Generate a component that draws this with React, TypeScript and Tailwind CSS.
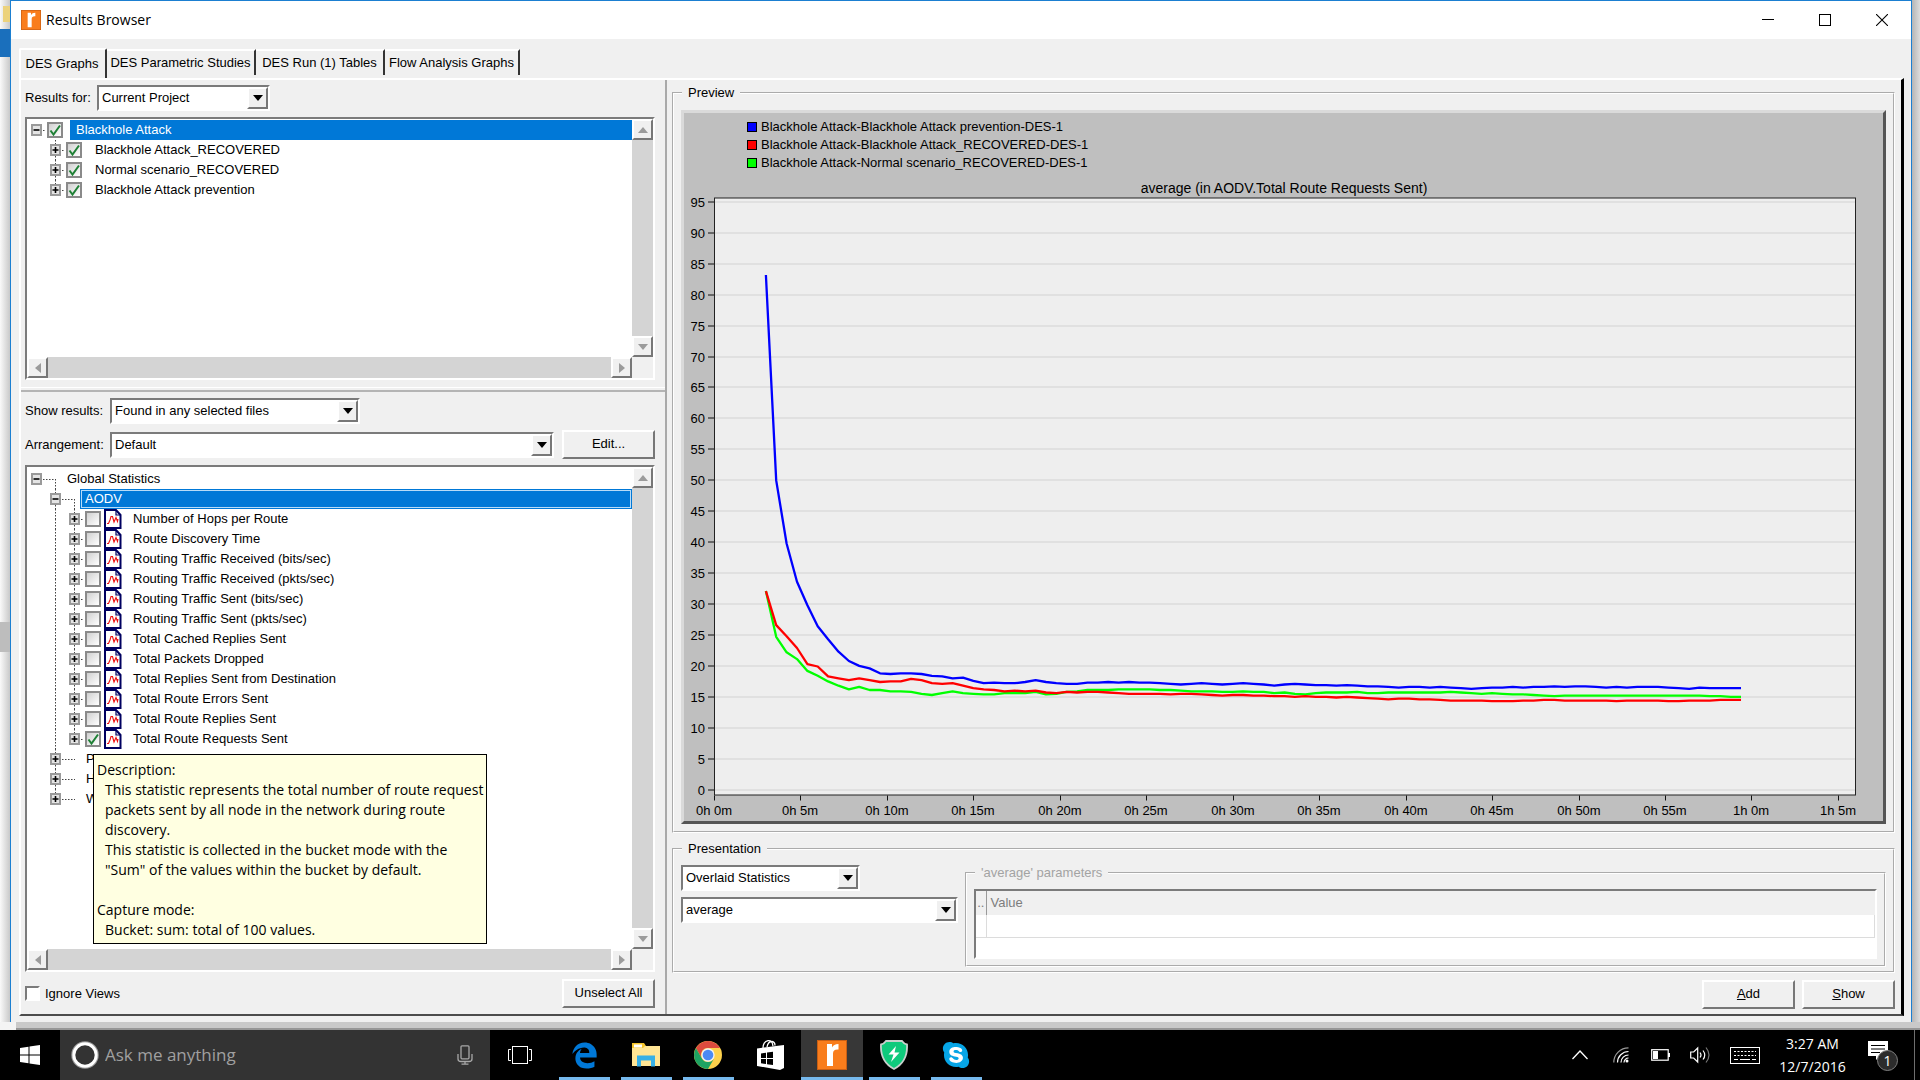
import React from "react";
import { FaEdgeLegacy, FaSkype } from "react-icons/fa6";

const UI = "font-['Liberation_Sans',Arial,sans-serif]";
const SEGOE = "font-['Open_Sans','Noto_Sans',sans-serif]";

/* ---------- chart data: one sample every 36 seconds, starting at 3 minutes ---------- */

const PREVENTION = [
  83.1, 49.9, 39.7, 33.5, 29.7, 26.3, 24.2, 22.2, 20.7, 19.9, 19.5, 18.7, 18.6, 18.7, 18.7, 18.6, 18.3, 18.2, 17.9,
  18.0, 17.5, 17.1, 17.2, 17.1, 17.1, 17.3, 17.6, 17.3, 17.1, 17.0, 17.0, 17.2, 17.2, 17.3, 17.2, 17.3, 17.2, 17.2,
  17.1, 17.0, 16.9, 17.0, 17.1, 17.0, 16.9, 17.0, 17.1, 17.0, 16.9, 16.7, 16.9, 17.0, 16.9, 16.8, 16.8, 16.7, 16.8,
  16.7, 16.6, 16.6, 16.5, 16.4, 16.5, 16.5, 16.4, 16.5, 16.4, 16.3, 16.2, 16.3, 16.4, 16.4, 16.5, 16.4, 16.5, 16.5,
  16.6, 16.5, 16.6, 16.6, 16.5, 16.4, 16.5, 16.4, 16.5, 16.5, 16.5, 16.4, 16.3, 16.2, 16.4, 16.3, 16.3, 16.3, 16.3,
];

const RECOVERED = [
  32.0, 26.5, 24.7, 22.8, 20.2, 19.8, 18.2, 17.9, 17.6, 17.9, 17.6, 17.3, 17.4, 17.4, 17.8, 17.6, 17.1, 17.0, 17.1,
  16.7, 16.3, 16.1, 16.0, 15.8, 15.9, 15.8, 15.9, 15.6, 15.5, 15.7, 15.6, 15.7, 15.7, 15.6, 15.5, 15.4, 15.4, 15.4,
  15.4, 15.3, 15.4, 15.4, 15.3, 15.2, 15.1, 15.2, 15.2, 15.1, 15.1, 15.0, 15.0, 14.9, 15.0, 14.9, 14.9, 14.8, 14.9,
  14.8, 14.7, 14.6, 14.5, 14.6, 14.6, 14.5, 14.5, 14.4, 14.3, 14.3, 14.3, 14.3, 14.2, 14.2, 14.2, 14.3, 14.3, 14.4,
  14.4, 14.3, 14.3, 14.3, 14.3, 14.3, 14.2, 14.3, 14.3, 14.3, 14.3, 14.2, 14.2, 14.3, 14.3, 14.3, 14.4, 14.4, 14.4,
];

const NORMAL = [
  32.0, 24.6, 22.1, 21.0, 19.1, 18.3, 17.4, 16.7, 16.1, 16.5, 16.0, 16.0, 15.8, 15.8, 15.7, 15.4, 15.2, 15.5, 15.8,
  15.5, 15.4, 15.3, 15.3, 15.5, 15.5, 15.5, 15.7, 15.3, 15.4, 15.7, 15.8, 16.0, 16.0, 16.0, 16.1, 16.1, 16.1, 16.1,
  16.0, 16.0, 15.9, 15.8, 15.8, 15.8, 15.7, 15.7, 15.8, 15.7, 15.7, 15.5, 15.6, 15.4, 15.3, 15.5, 15.6, 15.6, 15.6,
  15.7, 15.5, 15.5, 15.6, 15.6, 15.6, 15.6, 15.6, 15.6, 15.7, 15.6, 15.5, 15.4, 15.5, 15.4, 15.3, 15.3, 15.2, 15.1,
  15.0, 15.1, 15.1, 15.1, 15.1, 15.1, 15.1, 15.1, 15.1, 15.1, 15.1, 15.1, 15.1, 15.1, 15.1, 15.0, 15.0, 14.9, 14.9,
];

const SERIES = [
  { name: "Blackhole Attack-Blackhole Attack prevention-DES-1", swatch: "bg-[#0000ff]" },
  { name: "Blackhole Attack-Blackhole Attack_RECOVERED-DES-1", swatch: "bg-[#ff0000]" },
  { name: "Blackhole Attack-Normal scenario_RECOVERED-DES-1", swatch: "bg-[#00ff00]" },
];

const chartX = (minutes: number) => 30 + minutes * 17.29;
const chartY = (value: number) => 617.5 - value * 6.185;
const toPoints = (values: number[]) =>
  values.map((v, i) => `${chartX(3 + i * 0.6).toFixed(1)},${chartY(v).toFixed(1)}`).join(" ");

const Y_TICKS = Array.from({ length: 20 }, (_, i) => i * 5);
const X_TICKS = Array.from({ length: 14 }, (_, i) => i * 5);

function Chart() {
  return (
    <svg viewBox="0 1 1199 648" className="min-h-0 w-full flex-1" role="img" aria-label="average (in AODV.Total Route Requests Sent)">
      <g fontSize="13" fill="#000">
        <text x="600" y="21" textAnchor="middle" fontSize="14">average (in AODV.Total Route Requests Sent)</text>
        {Y_TICKS.map((v) => (
          <text key={v} x="21" y={Math.round(chartY(v)) + 5} textAnchor="end">{v}</text>
        ))}
        {X_TICKS.map((m) => (
          <text key={m} x={Math.round(chartX(m))} y="643" textAnchor="middle">
            {`${Math.floor(m / 60)}h ${m % 60}m`}
          </text>
        ))}
      </g>
      <rect x="30.5" y="26.5" width="1141" height="597" fill="#eeeeee" stroke="#222" />
      <g strokeWidth="1">
        {Y_TICKS.map((v) => (
          <g key={v}>
            <path d={`M31 ${Math.round(chartY(v)) + 0.5}H1171`} stroke="#d2d2d2" />
            <path d={`M24 ${Math.round(chartY(v)) + 0.5}H30`} stroke="#111" />
          </g>
        ))}
        {X_TICKS.map((m) => (
          <path key={m} d={`M${Math.round(chartX(m)) + 0.5} 624v5`} stroke="#111" />
        ))}
      </g>
      <g fill="none" strokeWidth="2.3" strokeLinejoin="round">
        <polyline points={toPoints(PREVENTION)} stroke="#0000ff" />
        <polyline points={toPoints(NORMAL)} stroke="#00ff00" />
        <polyline points={toPoints(RECOVERED)} stroke="#ff0000" />
      </g>
    </svg>
  );
}

/* ---------- controls ---------- */

const SUNKEN = "border-2 border-t-[#7b7b7b] border-l-[#7b7b7b] border-r-white border-b-white";
const RAISED = "border-2 border-t-white border-l-white border-r-[#777777] border-b-[#777777] bg-[#f0f0f0]";

function Combo({ id, value, label, className }: { id: string; value: string; label?: string; className: string }) {
  return (
    <div className={`flex h-[26px] bg-white ${SUNKEN} ${className}`}>
      <select id={id} aria-label={label} className="min-w-0 flex-1 appearance-none bg-white pl-[3px] outline-none">
        <option>{value}</option>
      </select>
      <span className={`pointer-events-none flex w-[21px] items-center justify-center ${RAISED}`}>
        <svg width="10" height="6" viewBox="0 0 10 6"><path d="M0 0h10L5 6z" fill="#000" /></svg>
      </span>
    </div>
  );
}

function PushButton({ children }: { children: React.ReactNode }) {
  return (
    <button type="button" className={`h-[29px] w-[93px] shrink-0 pb-0.5 text-center ${RAISED}`}>
      {children}
    </button>
  );
}

function ScrollButton({ dir }: { dir: "up" | "down" | "left" | "right" }) {
  const d = {
    up: "M5 2l5 6H0z",
    down: "M0 2h10L5 8z",
    left: "M2 5l6-5v10z",
    right: "M8 5L2 0v10z",
  }[dir];
  return (
    <button type="button" aria-label={`Scroll ${dir}`} className={`flex h-[21px] w-[21px] shrink-0 items-center justify-center ${RAISED}`}>
      <svg width="10" height="10" viewBox="0 0 10 10"><path d={d} fill="#9b9b9b" /></svg>
    </button>
  );
}

function ScrollPane({ children }: { children: React.ReactNode }) {
  return (
    <div className="grid h-full grid-cols-[1fr_21px] grid-rows-[1fr_21px] bg-[#f0f0f0]">
      <div className="min-h-0 min-w-0 bg-white">{children}</div>
      <div className="flex flex-col justify-between bg-[#d4d4d4]">
        <ScrollButton dir="up" />
        <ScrollButton dir="down" />
      </div>
      <div className="flex justify-between bg-[#d4d4d4]">
        <ScrollButton dir="left" />
        <ScrollButton dir="right" />
      </div>
    </div>
  );
}

function TreeCheck({ label, checked }: { label: string; checked?: boolean }) {
  return (
    <span className="relative ml-px h-4 w-4 shrink-0">
      <input
        type="checkbox"
        aria-label={label}
        defaultChecked={checked}
        className="peer block h-4 w-4 appearance-none border-2 border-[#8a8a8a] bg-linear-to-br from-[#d0d0d0] to-white"
      />
      <svg className="pointer-events-none absolute inset-0 hidden peer-checked:block" width="16" height="16" viewBox="0 0 16 16">
        <path d="M3.5 8.5l3 4L13 3.5" fill="none" stroke="#1f8136" strokeWidth="2" />
      </svg>
    </span>
  );
}

/* One 19px indent step of the tree: dotted guides plus an optional expander box. */
function Guide({ up, down, stub, box }: { up?: boolean; down?: boolean; stub?: boolean; box?: "+" | "-" }) {
  return (
    <svg width="19" height="20" viewBox="0 0 19 20" className="shrink-0">
      <g stroke="#444" strokeDasharray="1.5 1.5" fill="none">
        {up && <path d="M9.5 0v10" />}
        {down && <path d="M9.5 10v10" />}
        {stub && <path d="M0 10.5h10" />}
        {box && <path d="M10 10.5h9" />}
      </g>
      {box && (
        <g>
          <rect x="5" y="5" width="9" height="10" fill="#e4e4e4" stroke="#9a9a9a" strokeWidth="2" />
          <path d={box === "+" ? "M6.500 10h6M9.500 7v6" : "M6.500 10h6"} stroke="#000" strokeWidth="1.6" />
        </g>
      )}
    </svg>
  );
}

function Blank() {
  return <span className="w-[19px] shrink-0" />;
}

function StatIcon() {
  return (
    <svg width="18" height="20" viewBox="0 0 18 20" className="ml-[3px] shrink-0">
      <path d="M1 1h11l4.500 5v13H1z" fill="#fff" stroke="#000060" strokeWidth="2" />
      <path d="M12 1v5h4.500" fill="none" stroke="#000060" strokeWidth="1.2" />
      <path d="M3 14.500h1.500l1.500-3.500 1-3.500h1.500l1.500 5.500 2-4.500 1.500 4 .5-2.500" fill="none" stroke="#f01010" strokeWidth="1.1" />
    </svg>
  );
}

/* ---------- left column ---------- */

const PROJECTS = ["Blackhole Attack_RECOVERED", "Normal scenario_RECOVERED", "Blackhole Attack prevention"];

const STATS = [
  "Number of Hops per Route",
  "Route Discovery Time",
  "Routing Traffic Received (bits/sec)",
  "Routing Traffic Received (pkts/sec)",
  "Routing Traffic Sent (bits/sec)",
  "Routing Traffic Sent (pkts/sec)",
  "Total Cached Replies Sent",
  "Total Packets Dropped",
  "Total Replies Sent from Destination",
  "Total Route Errors Sent",
  "Total Route Replies Sent",
  "Total Route Requests Sent",
];

const ROW = "flex h-5 items-center whitespace-nowrap";

function ProjectTree() {
  return (
    <ScrollPane>
      <ul className="pt-px">
        <li className={ROW}>
          <Guide box="-" />
          <TreeCheck label="Blackhole Attack" checked />
          <span className="ml-[7px] h-5 flex-1 bg-[#0078d7] pl-1.5 leading-5 text-white">Blackhole Attack</span>
        </li>
        {PROJECTS.map((name, i) => (
          <li key={name} className={ROW}>
            <Blank />
            <Guide box="+" up down={i < 2} />
            <TreeCheck label={name} checked />
            <span className="ml-[13px]">{name}</span>
          </li>
        ))}
      </ul>
    </ScrollPane>
  );
}

function Tooltip() {
  return (
    <div
      role="tooltip"
      className={`absolute top-[287px] left-[66px] w-[394px] border border-black bg-[#ffffe1] px-[3px] pt-[5px] pb-[3px] text-sm leading-5 whitespace-nowrap ${SEGOE}`}
    >
      <p>Description:</p>
      <div className="pl-2">
        <p>This statistic represents the total number of route request</p>
        <p>packets sent by all node in the network during route</p>
        <p>discovery.</p>
        <p>This statistic is collected in the bucket mode with the</p>
        <p>"Sum" of the values within the bucket by default.</p>
      </div>
      <p className="mt-5">Capture mode:</p>
      <p className="pl-2">Bucket: sum: total of 100 values.</p>
    </div>
  );
}

function StatisticsTree() {
  return (
    <ScrollPane>
      <ul className="pt-0.5">
        <li className={ROW}>
          <Guide box="-" />
          <Guide stub down />
          <span className="ml-0.5">Global Statistics</span>
        </li>
        <li className={ROW}>
          <Blank />
          <Guide box="-" up down />
          <Guide stub down />
          <span className="-ml-1 h-5 flex-1 border border-[#0078d7] bg-[#0078d7] pl-1 leading-[18px] text-white inset-ring inset-ring-[#b8dcf8]">
            AODV
          </span>
        </li>
        {STATS.map((name, i) => (
          <li key={name} className={ROW}>
            <Blank />
            <Guide up down />
            <Guide box="+" up down={i < STATS.length - 1} />
            <TreeCheck label={name} checked={i === STATS.length - 1} />
            <StatIcon />
            <span className="ml-[11px]">{name}</span>
          </li>
        ))}
        {["P", "H", "W"].map((name, i) => (
          <li key={name} className={ROW}>
            <Blank />
            <Guide box="+" up down={i < 2} />
            <Guide stub />
            <span className="ml-0.5">{name}</span>
          </li>
        ))}
      </ul>
    </ScrollPane>
  );
}

function LeftColumn() {
  return (
    <div className="flex w-[644px] shrink-0 flex-col">
      <section className="border-b border-white pt-[5px] pr-[10px] pb-[7px] pl-1">
        <div className="flex items-center">
          <label htmlFor="results-for" className="w-[72px]">Results for:</label>
          <Combo id="results-for" value="Current Project" className="w-[173px]" />
        </div>
        <div className={`mt-1.5 h-[263px] ${SUNKEN}`}>
          <ProjectTree />
        </div>
      </section>
      <section className="mt-0.5 flex min-h-0 flex-1 flex-col border-t-2 border-[#b4b4b4] pt-1.5 pr-[10px] pb-1.5 pl-1">
        <div className="flex items-center">
          <label htmlFor="show-results" className="w-[85px]">Show results:</label>
          <Combo id="show-results" value="Found in any selected files" className="w-[250px]" />
        </div>
        <div className="mt-1.5 flex items-center">
          <label htmlFor="arrangement" className="w-[85px] shrink-0">Arrangement:</label>
          <Combo id="arrangement" value="Default" className="mr-2 flex-1" />
          <PushButton>Edit...</PushButton>
        </div>
        <div className={`relative mt-1.5 min-h-0 flex-1 ${SUNKEN}`}>
          <StatisticsTree />
          <Tooltip />
        </div>
        <div className="mt-[7px] flex items-center justify-between">
          <label className="flex items-center gap-[5px]">
            <input type="checkbox" className={`h-[15px] w-[15px] appearance-none bg-white ${SUNKEN}`} />
            Ignore Views
          </label>
          <PushButton>Unselect All</PushButton>
        </div>
      </section>
    </div>
  );
}

/* ---------- right column ---------- */

const GROUP = "min-w-0 border-2 border-white [border-style:groove]";

function RightColumn() {
  return (
    <div className="flex min-w-0 flex-1 flex-col border-l-2 border-[#a9a9a9] pt-[3px] pr-1.5 pb-[5px] pl-[5px]">
      <fieldset className={`flex min-h-0 flex-1 flex-col px-[7px] pt-[7px] pb-[7px] ${GROUP}`}>
        <legend className="ml-px px-1.5 leading-5">Preview</legend>
        <div className="flex h-full min-h-0 flex-col border-3 border-t-[#dadada] border-r-[#555555] border-b-[#555555] border-l-[#dadada] bg-[#bfbfbf] pt-[5px]">
          <ul className="ml-[63px]">
            {SERIES.map((s) => (
              <li key={s.name} className="flex h-[18px] items-center gap-1">
                <span className={`h-2.5 w-2.5 border border-black ${s.swatch}`} />
                {s.name}
              </li>
            ))}
          </ul>
          <Chart />
        </div>
      </fieldset>

      <fieldset className={`mt-1.5 px-[7px] pb-[4px] ${GROUP}`}>
        <legend className="ml-px px-1.5 leading-5">Presentation</legend>
        <div className="flex gap-[7px]">
          <div className="flex w-[277px] flex-col gap-1.5 pt-1.5">
            <Combo id="presentation" label="Presentation" value="Overlaid Statistics" className="w-[179px]" />
            <Combo id="filter" label="Filter" value="average" className="w-full" />
          </div>
          <fieldset disabled className={`mt-1 flex-1 px-[7px] pt-1.5 pb-[6px] ${GROUP}`}>
            <legend className="ml-px px-1.5 leading-5 text-[#a3a3a3]">'average' parameters</legend>
            <div className={`h-[70px] bg-white ${SUNKEN}`}>
              <table className="w-full border-collapse text-left text-[#7d7d7d]">
                <thead>
                  <tr className="h-6 bg-[#f0f0f0]">
                    <th className="w-2.5 border-r border-[#999999] p-0 text-center font-normal">..</th>
                    <th className="py-0 pr-0 pl-1 font-normal">Value</th>
                  </tr>
                </thead>
                <tbody>
                  <tr className="h-[22px] border-b border-[#dcdcdc]">
                    <td className="border-r border-[#dcdcdc] p-0" />
                    <td className="border-r border-[#dcdcdc] p-0" />
                  </tr>
                </tbody>
              </table>
            </div>
          </fieldset>
        </div>
      </fieldset>

      <div className="mt-[7px] flex justify-end gap-[7px]">
        <PushButton><u>A</u>dd</PushButton>
        <PushButton><u>S</u>how</PushButton>
      </div>
    </div>
  );
}

/* ---------- window ---------- */

function RLogo({ size }: { size: number }) {
  return (
    <svg width={size} height={size} viewBox="0 0 30 30">
      <rect width="30" height="30" fill="#c85f14" />
      <rect x="1" y="1" width="28" height="28" fill="#f97d1c" />
      <path d="M10 4h5v3.500Q16.500 4 21.500 4v5.500Q16 9 16 13.500V26h-6z" fill="#fff" />
    </svg>
  );
}

const TABS = [
  { name: "DES Parametric Studies", width: "w-[149px]" },
  { name: "DES Run (1) Tables", width: "w-[129px]" },
  { name: "Flow Analysis Graphs", width: "w-[135px]" },
];

function ResultsWindow() {
  return (
    <div className="flex min-w-0 flex-1 flex-col border border-b-0 border-[#1b7fd1] bg-[#f0f0f0]">
      <header className={`flex h-[38px] shrink-0 items-center bg-white pr-px pl-2.5 ${SEGOE}`}>
        <RLogo size={20} />
        <h1 className="ml-[5px] flex-1 text-sm">Results Browser</h1>
        <button type="button" aria-label="Minimize" className="flex h-full w-[57px] items-center justify-center">
          <svg width="12" height="12" viewBox="0 0 12 12"><path d="M0 5.500h12" stroke="#000" /></svg>
        </button>
        <button type="button" aria-label="Maximize" className="flex h-full w-[57px] items-center justify-center">
          <svg width="12" height="12" viewBox="0 0 12 12"><rect x=".5" y=".5" width="11" height="11" fill="none" stroke="#000" /></svg>
        </button>
        <button type="button" aria-label="Close" className="flex h-full w-[57px] items-center justify-center">
          <svg width="12" height="12" viewBox="0 0 12 12"><path d="M0 0l12 12M12 0L0 12" stroke="#000" strokeWidth="1.1" /></svg>
        </button>
      </header>
      <div className={`flex min-h-0 flex-1 flex-col pt-[9px] pr-[7px] pb-1.5 pl-2 text-[13px] ${UI}`}>
        <div role="tablist" className="flex h-[30px] shrink-0 items-end">
          <button type="button" role="tab" aria-selected="true" className="h-full w-[88px] rounded-t-xs border-2 border-r-2 border-b-0 border-white border-r-[#333333] pr-0.5 text-center">
            DES Graphs
          </button>
          {TABS.map((t) => (
            <button key={t.name} type="button" role="tab" aria-selected="false" className={`mb-[3px] h-[26px] border-t-2 border-r-2 border-t-white border-r-[#333333] text-center whitespace-nowrap ${t.width}`}>
              {t.name}
            </button>
          ))}
        </div>
        <div className="flex min-h-0 flex-1 border-t-2 border-r-3 border-b-2 border-l-2 border-t-white border-r-black border-b-[#4c4c4c] border-l-white">
          <LeftColumn />
          <RightColumn />
        </div>
      </div>
    </div>
  );
}

/* ---------- taskbar ---------- */

function TaskButton({ label, open, active, children }: { label: string; open?: boolean; active?: boolean; children: React.ReactNode }) {
  return (
    <button
      type="button"
      aria-label={label}
      className={`flex h-full w-[62px] flex-col items-center ${active ? "bg-[#373737]" : ""}`}
    >
      <span className="flex flex-1 items-center pt-[3px]">{children}</span>
      <span className={`h-[3px] ${active ? "w-full" : "w-[51px]"} ${open ? "bg-[#76b9ed]" : ""}`} />
    </button>
  );
}

function Taskbar() {
  return (
    <footer className={`flex h-[50px] shrink-0 items-center bg-black text-white ${SEGOE}`}>
      <button type="button" aria-label="Start" className="flex h-full w-[60px] items-center justify-center">
        <svg width="20" height="20" viewBox="0 0 20 20" fill="#fff">
          <path d="M0 3l8.500-1.300v7.800H0zM9.500 1.500L20 0v9.500H9.500zM0 10.500h8.500v7.800L0 17zM9.500 10.500H20V20L9.500 18.500z" />
        </svg>
      </button>
      <label className="flex h-full w-[430px] items-center bg-[#333333] pr-[17px] pl-[11px]">
        <svg width="28" height="28" viewBox="0 0 28 28" className="shrink-0">
          <circle cx="14" cy="14" r="13" fill="none" stroke="#9a9a9a" strokeWidth="1.5" />
          <circle cx="14" cy="14" r="11.200" fill="none" stroke="#fff" strokeWidth="3" />
        </svg>
        <input type="text" aria-label="Search" placeholder="Ask me anything" className="ml-1.5 min-w-0 flex-1 bg-transparent text-[17px] outline-none placeholder:text-[#a0a0a0]" />
        <svg width="16" height="20" viewBox="0 0 16 20" fill="none" stroke="#a8a8a8" strokeWidth="1.3">
          <rect x="4" y=".8" width="8" height="13" rx="1" />
          <path d="M1 9v5q0 2.500 3 2.500h8q3 0 3-2.500V9M8 16.500V19M4.500 19.200h7" />
        </svg>
      </label>
      <button type="button" aria-label="Task View" className="flex h-full w-[63px] items-center justify-center pr-1">
        <svg width="24" height="18" viewBox="0 0 24 18" fill="none" stroke="#fff">
          <rect x="4.500" y=".5" width="15" height="17" />
          <path d="M3 3.500H.5v11H3M21 3.500h2.500v11H21" />
        </svg>
      </button>
      <TaskButton label="Microsoft Edge" open>
        <FaEdgeLegacy size={27} color="#0078d7" />
      </TaskButton>
      <TaskButton label="File Explorer" open>
        <svg width="28" height="24" viewBox="0 0 28 24">
          <path d="M0 0h12l2 3h13v8H0z" fill="#f5c52c" />
          <path d="M2 1.500h8v3H2z" fill="#fff" />
          <path d="M0 5h11l2-2h15v20H0z" fill="#ffe594" />
          <path d="M5 23.500V12.500h18v11h-4v-6h-10v6z" fill="#37b0e6" />
        </svg>
      </TaskButton>
      <TaskButton label="Google Chrome" open>
        <svg width="28" height="28" viewBox="0 0 28 28">
          <circle cx="14" cy="14" r="14" fill="#fdd14c" />
          <path d="M1.900 7A14 14 0 0 1 26.100 7H14a7 7 0 0 0-6.100 10.500z" fill="#dc4b3e" />
          <path d="M1.900 7A14 14 0 0 0 14 28l6.100-10.500A7 7 0 0 1 7.900 17.500z" fill="#1ea362" />
          <circle cx="14" cy="14" r="6.700" fill="#f1f1f1" />
          <circle cx="14" cy="14" r="5.300" fill="#4a8af4" />
        </svg>
      </TaskButton>
      <TaskButton label="Store">
        <svg width="27" height="30" viewBox="0 0 27 30">
          <path d="M6 8q0-6 5-7.300 4.500-.5 5 5.500M10 7q1-5.500 5-5.500 3 .5 3 4" fill="none" stroke="#fff" strokeWidth="1.300" />
          <path d="M0 8.500L27 5v23l-4 2-23-4z" fill="#fff" />
          <path d="M4 13.500l5-.7v5.200H4zM10 12.600l6-.8V18h-6zM4 19h5v5l-5-.7zM10 19h6v6l-6-.8z" fill="#000" />
        </svg>
      </TaskButton>
      <TaskButton label="Results Browser" open active>
        <RLogo size={30} />
      </TaskButton>
      <TaskButton label="Security" open>
        <svg width="28" height="30" viewBox="0 0 28 30">
          <path d="M6 1h16q2 3 5 3.500 1 17-13 24.500Q0 21.500 1 4.500 4 4 6 1z" fill="#0fca7c" stroke="#c8cfcc" strokeWidth="1.800" />
          <path d="M16 6l-7.500 8.500h5L11 22l8.500-9.500h-5z" fill="#fff" />
        </svg>
      </TaskButton>
      <TaskButton label="Skype" open>
        <span className="rounded-full bg-[radial-gradient(white_50%,transparent_52%)]">
          <FaSkype size={30} color="#06a5e6" />
        </span>
      </TaskButton>

      <div className="ml-auto flex h-full items-center">
        <button type="button" aria-label="Show hidden icons" className="flex w-8 justify-center">
          <svg width="16" height="10" viewBox="0 0 16 10"><path d="M.5 9L8 1l7.500 8" fill="none" stroke="#fff" strokeWidth="1.300" /></svg>
        </button>
        <button type="button" aria-label="Network" className="ml-[17px]">
          <svg width="16" height="16" viewBox="0 0 16 16" fill="none" strokeWidth="1.200">
            <path d="M.8 15.500A14.700 14.700 0 0 1 15.500.8" stroke="#999" />
            <path d="M4.500 15.500a11 11 0 0 1 11-11M8 15.500A7.500 7.500 0 0 1 15.500 8" stroke="#fff" />
            <path d="M11 15.500a4.500 4.500 0 0 1 4.500-4.500" stroke="#fff" />
            <circle cx="14" cy="14" r="1.500" fill="#fff" />
          </svg>
        </button>
        <button type="button" aria-label="Battery" className="ml-[22px]">
          <svg width="19" height="12" viewBox="0 0 19 12">
            <rect x=".7" y=".7" width="16.500" height="10.500" fill="none" stroke="#fff" strokeWidth="1.200" />
            <path d="M2 2h5v8H2zM17 4h2v4h-2z" fill="#fff" />
          </svg>
        </button>
        <button type="button" aria-label="Volume" className="ml-5">
          <svg width="21" height="18" viewBox="0 0 21 18" fill="none" stroke="#fff" strokeWidth="1.200">
            <path d="M.7 6h3l4-4v14l-4-4h-3z" />
            <path d="M10 6.500q2 2.500 0 5M13 4.500q3.500 4.500 0 9" />
            <path d="M16 1.500q6 7.500 0 15" stroke="#777" />
          </svg>
        </button>
        <button type="button" aria-label="Touch keyboard" className="ml-[19px]">
          <svg width="30" height="17" viewBox="0 0 30 17" fill="none" stroke="#fff">
            <rect x=".5" y=".5" width="29" height="16" />
            <path d="M4 4.500h22M4 8.500h22" strokeDasharray="2 1.500" strokeWidth="1.200" />
            <path d="M4 12.500h4M10 12.500h10M22 12.500h4" strokeWidth="1.200" />
          </svg>
        </button>
        <div className="ml-[18px] w-[69px] text-center text-sm leading-[23px]">
          <p>3:27 AM</p>
          <p>12/7/2016</p>
        </div>
        <button type="button" aria-label="1 notification" className="relative ml-5 h-[31px] w-[31px]">
          <svg width="31" height="31" viewBox="0 0 31 31">
            <path d="M1 1h20v15H13l-4 4v-4H1z" fill="#fff" />
            <path d="M4 5.500h14M4 9h14M4 12.500h9" stroke="#000" strokeWidth="1.200" />
            <circle cx="20.500" cy="20.500" r="10" fill="#2c2c2c" stroke="#808080" />
          </svg>
          <span className="absolute right-0 bottom-0 w-[21px] text-center text-sm leading-[21px]">1</span>
        </button>
        <span className="ml-4 h-[50px] w-1.5 border-l border-[#6e6e6e]" />
      </div>
    </footer>
  );
}

export default function App() {
  return (
    <div className="flex h-screen min-h-[900px] flex-col overflow-hidden bg-[#f4f4f4] text-black">
      <div className="flex min-h-0 flex-1">
        <div className="flex w-2.5 shrink-0 flex-col bg-linear-to-r from-[#fafafa] to-[#c9c9c9]">
          <span className="mt-1.5 ml-[3px] h-4 bg-[#ecd27c]" />
          <span className="mt-[7px] h-7 bg-[#1a6fbc]" />
          <span className="mt-[565px] h-[30px] bg-[#bdbdbd]" />
        </div>
        <ResultsWindow />
        <div className="w-2 shrink-0 bg-linear-to-r from-[#b5b5b5] to-[#dcdcdc]" />
      </div>
      <div className="ml-4 h-2 shrink-0 border-b-2 border-[#969696] bg-[#c9c9c9]" />
      <Taskbar />
    </div>
  );
}
